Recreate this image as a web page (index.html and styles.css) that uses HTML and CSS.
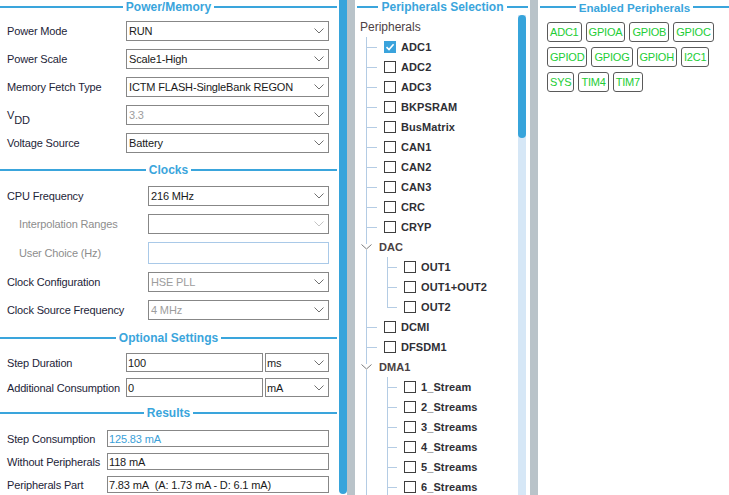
FILE: index.html
```html
<!DOCTYPE html>
<html>
<head>
<meta charset="utf-8">
<title>Power Consumption Calculator</title>
<link rel="stylesheet" href="styles.css">
</head>
<body>
<div class="app">
  <div class="panel left">
    <section class="sec">
      <div class="sec-head"><span>Power/Memory</span></div>
      <div class="form form-power">
        <label>Power Mode</label>
        <div class="select"><span>RUN</span><svg class="chev" width="10" height="6" viewBox="0 0 10 6"><path d="M0.5 0.5 L5 5 L9.5 0.5"/></svg></div>
        <label>Power Scale</label>
        <div class="select"><span>Scale1-High</span><svg class="chev" width="10" height="6" viewBox="0 0 10 6"><path d="M0.5 0.5 L5 5 L9.5 0.5"/></svg></div>
        <label>Memory Fetch Type</label>
        <div class="select"><span>ICTM FLASH-SingleBank REGON</span><svg class="chev" width="10" height="6" viewBox="0 0 10 6"><path d="M0.5 0.5 L5 5 L9.5 0.5"/></svg></div>
        <label class="vdd">V<sub>DD</sub></label>
        <div class="select"><span class="muted">3.3</span><svg class="chev" width="10" height="6" viewBox="0 0 10 6"><path d="M0.5 0.5 L5 5 L9.5 0.5"/></svg></div>
        <label>Voltage Source</label>
        <div class="select"><span>Battery</span><svg class="chev" width="10" height="6" viewBox="0 0 10 6"><path d="M0.5 0.5 L5 5 L9.5 0.5"/></svg></div>
      </div>
    </section>

    <section class="sec sec-clocks">
      <div class="sec-head"><span>Clocks</span></div>
      <div class="form form-clocks">
        <label>CPU Frequency</label>
        <div class="select"><span>216 MHz</span><svg class="chev" width="10" height="6" viewBox="0 0 10 6"><path d="M0.5 0.5 L5 5 L9.5 0.5"/></svg></div>
        <label class="sub-label">Interpolation Ranges</label>
        <div class="select"><span></span><svg class="chev chev-off" width="10" height="6" viewBox="0 0 10 6"><path d="M0.5 0.5 L5 5 L9.5 0.5"/></svg></div>
        <label class="sub-label">User Choice (Hz)</label>
        <div class="field field-off"></div>
        <label>Clock Configuration</label>
        <div class="select"><span class="muted">HSE PLL</span><svg class="chev" width="10" height="6" viewBox="0 0 10 6"><path d="M0.5 0.5 L5 5 L9.5 0.5"/></svg></div>
        <label>Clock Source Frequency</label>
        <div class="select"><span class="muted">4 MHz</span><svg class="chev" width="10" height="6" viewBox="0 0 10 6"><path d="M0.5 0.5 L5 5 L9.5 0.5"/></svg></div>
      </div>
    </section>

    <section class="sec sec-opt">
      <div class="sec-head"><span>Optional Settings</span></div>
      <div class="form form-opt">
        <label>Step Duration</label>
        <div class="field">100</div>
        <div class="select unit"><span>ms</span><svg class="chev" width="10" height="6" viewBox="0 0 10 6"><path d="M0.5 0.5 L5 5 L9.5 0.5"/></svg></div>
        <label>Additional Consumption</label>
        <div class="field">0</div>
        <div class="select unit"><span>mA</span><svg class="chev" width="10" height="6" viewBox="0 0 10 6"><path d="M0.5 0.5 L5 5 L9.5 0.5"/></svg></div>
      </div>
    </section>

    <section class="sec sec-res">
      <div class="sec-head"><span>Results</span></div>
      <div class="form form-res">
        <label>Step Consumption</label>
        <div class="field result accent">125.83 mA</div>
        <label>Without Peripherals</label>
        <div class="field result">118 mA</div>
        <label>Peripherals Part</label>
        <div class="field result">7.83 mA&nbsp; (A: 1.73 mA - D: 6.1 mA)</div>
      </div>
    </section>
  </div>
  <div class="lscroll"></div>
  <div class="divider"></div>

  <div class="panel mid">
    <div class="sec-head"><span>Peripherals Selection</span></div>
    <div class="mid-body">
      <div class="tree-wrap">
        <div class="tree-root">Peripherals</div>
        <ul class="tree">
          <li class="leaf checked"><span class="cb"><svg width="12" height="12" viewBox="0 0 12 12"><path d="M2.5 6.2 L5 8.6 L9.6 3.2"/></svg></span>ADC1</li>
          <li class="leaf"><span class="cb"></span>ADC2</li>
          <li class="leaf"><span class="cb"></span>ADC3</li>
          <li class="leaf"><span class="cb"></span>BKPSRAM</li>
          <li class="leaf"><span class="cb"></span>BusMatrix</li>
          <li class="leaf"><span class="cb"></span>CAN1</li>
          <li class="leaf"><span class="cb"></span>CAN2</li>
          <li class="leaf"><span class="cb"></span>CAN3</li>
          <li class="leaf"><span class="cb"></span>CRC</li>
          <li class="leaf"><span class="cb"></span>CRYP</li>
          <li class="group">
            <div class="grp-head"><svg class="tchev" width="11" height="6" viewBox="0 0 11 6"><path d="M0.5 0.5 L5.5 5 L10.5 0.5"/></svg>DAC</div>
            <ul class="sub">
              <li><span class="cb"></span>OUT1</li>
              <li><span class="cb"></span>OUT1+OUT2</li>
              <li><span class="cb"></span>OUT2</li>
            </ul>
          </li>
          <li class="leaf"><span class="cb"></span>DCMI</li>
          <li class="leaf"><span class="cb"></span>DFSDM1</li>
          <li class="group">
            <div class="grp-head"><svg class="tchev" width="11" height="6" viewBox="0 0 11 6"><path d="M0.5 0.5 L5.5 5 L10.5 0.5"/></svg>DMA1</div>
            <ul class="sub">
              <li><span class="cb"></span>1_Stream</li>
              <li><span class="cb"></span>2_Streams</li>
              <li><span class="cb"></span>3_Streams</li>
              <li><span class="cb"></span>4_Streams</li>
              <li><span class="cb"></span>5_Streams</li>
              <li><span class="cb"></span>6_Streams</li>
              <li><span class="cb"></span>7_Streams</li>
            </ul>
          </li>
        </ul>
      </div>
      <div class="mscroll"><div class="thumb"></div></div>
    </div>
  </div>
  <div class="divider"></div>

  <div class="panel right">
    <div class="sec-head"><span>Enabled Peripherals</span></div>
    <div class="chips">
      <div class="chip-row">
        <span class="chip">ADC1</span><span class="chip">GPIOA</span><span class="chip">GPIOB</span><span class="chip">GPIOC</span>
      </div>
      <div class="chip-row">
        <span class="chip">GPIOD</span><span class="chip">GPIOG</span><span class="chip">GPIOH</span><span class="chip">I2C1</span>
      </div>
      <div class="chip-row">
        <span class="chip">SYS</span><span class="chip">TIM4</span><span class="chip">TIM7</span>
      </div>
    </div>
  </div>
</div>
</body>
</html>
```

FILE: styles.css
```css
* { box-sizing: border-box; }
html, body { margin: 0; padding: 0; }
body {
  width: 729px;
  height: 495px;
  overflow: hidden;
  background: #ffffff;
  font-family: "Liberation Sans", Arial, sans-serif;
  font-size: 11px;
  color: #1d2438;
}
.app { display: flex; height: 495px; }

.panel { background: #fff; height: 495px; overflow: hidden; }
.left { width: 339px; padding-right: 2px; }
.lscroll { width: 8px; height: 494px; background: #37a4db; border-radius: 0 0 4px 4px; }
.divider { width: 8px; background: #b9c3c9; }
.mid { width: 175px; display: flex; flex-direction: column; padding: 0 2px; }
.right { flex: 1; padding-left: 2px; }

/* section header with line */
.sec-head {
  display: flex;
  align-items: center;
  gap: 3px;
  height: 14px;
  color: #3aa5dc;
  font-weight: bold;
  font-size: 12px;
  white-space: nowrap;
}
.sec-head::before, .sec-head::after {
  content: "";
  flex: 1;
  height: 2px;
  background: #3aa5dc;
}
.right .sec-head { font-size: 11.6px; }

.sec-clocks { margin-top: 10px; }
.sec-opt { margin-top: 11px; }
.sec-res { margin-top: 9px; }

.form {
  display: grid;
  align-items: center;
  padding-left: 7px;
  letter-spacing: -0.15px;
}
.form label { white-space: nowrap; }
.form-power { grid-template-columns: 119px 203px; row-gap: 8px; margin-top: 7px; }
.form-clocks { grid-template-columns: 141px 181px; row-gap: 8px; margin-top: 9px; }
.form-opt { grid-template-columns: 119px 137px 66px; row-gap: 6px; margin-top: 8px; }
.form-res { grid-template-columns: 100px 222px; row-gap: 6px; margin-top: 10px; }

.sub-label { padding-left: 12px; color: #8d8d8d; }
.vdd sub { font-size: 11px; vertical-align: -5px; line-height: 0; }

.select {
  display: flex;
  align-items: center;
  justify-content: space-between;
  height: 20px;
  border: 1px solid #878787;
  background: #fff;
  padding: 0 4px 0 2px;
  color: #1a1a1a;
  white-space: nowrap;
}
.chev path { fill: none; stroke: #707070; stroke-width: 1; }
.chev-off path { stroke: #c4c4c4; }
.muted { color: #9d9d9d; }

.field {
  height: 20px;
  border: 1px solid #878787;
  background: #fff;
  padding: 0 1px;
  display: flex;
  align-items: center;
  color: #1a1a1a;
  white-space: nowrap;
}
.field-off { border-color: #a9c9e8; height: 22px; }
.form-opt .field, .form-opt .select { height: 19px; }
.form-opt .unit { margin-left: 2px; padding-left: 1px; }
.form-res .field { height: 17px; padding: 0 0 0 1px; }
.accent { color: #3a9fd8; }

/* middle tree */
.mid-body { flex: 1; display: flex; min-height: 0; }
.tree-wrap { flex: 1; padding-top: 3px; overflow: hidden; }
.tree-root { height: 20px; line-height: 20px; padding-left: 3px; font-size: 12px; color: #4e4245; }
.mscroll { width: 8px; margin-top: 1px; margin-right: 2px; background: #d6e7f6; }
.mscroll .thumb { height: 123px; background: #37a4db; border-radius: 4px; }

ul { list-style: none; margin: 0; padding: 0; }
.tree { margin-left: 9px; border-left: 1px solid #b4cce4; }
.tree li { font-weight: bold; color: #2f2f35; font-size: 11px; letter-spacing: 0.1px; }
.leaf, .sub li {
  display: flex;
  align-items: center;
  height: 20px;
  white-space: nowrap;
}
.leaf {
  background: linear-gradient(#b4cce4, #b4cce4) 0 10px / 10px 1px no-repeat;
}
.sub { margin-left: 20px; }
.sub li {
  background:
    linear-gradient(#b4cce4, #b4cce4) 0 0 / 1px 100% no-repeat,
    linear-gradient(#b4cce4, #b4cce4) 0 10px / 10px 1px no-repeat;
}
.sub li:last-child {
  background:
    linear-gradient(#b4cce4, #b4cce4) 0 0 / 1px 11px no-repeat,
    linear-gradient(#b4cce4, #b4cce4) 0 10px / 10px 1px no-repeat;
}
.cb {
  width: 12px;
  height: 12px;
  margin-left: 17px;
  margin-right: 5px;
  border: 1px solid #3f3f3f;
  background: #fff;
  display: inline-flex;
  flex-shrink: 0;
}
.checked { color: #27c93a; }
.checked .cb { border-color: #3aa3dc; background: #3aa3dc; }
.checked .cb svg { margin: -1px; }
.checked .cb path { fill: none; stroke: #fff; stroke-width: 1.6; }

.grp-head {
  display: flex;
  align-items: center;
  height: 20px;
  color: #4a3f42;
}
.tchev { margin-left: -6px; margin-right: 7px; background: #fff; }
.tchev path { fill: none; stroke: #7c7c7c; stroke-width: 1; }

/* right chips */
.chips { padding: 8px 0 0 7px; display: flex; flex-direction: column; gap: 5px; }
.chip-row { display: flex; gap: 4px; }
.chip {
  height: 20px;
  display: flex;
  align-items: center;
  padding: 0 2px;
  border: 1px solid #5a5a5a;
  border-radius: 3px;
  color: #22cd35;
  font-size: 11px;
  letter-spacing: -0.2px;
}
```
